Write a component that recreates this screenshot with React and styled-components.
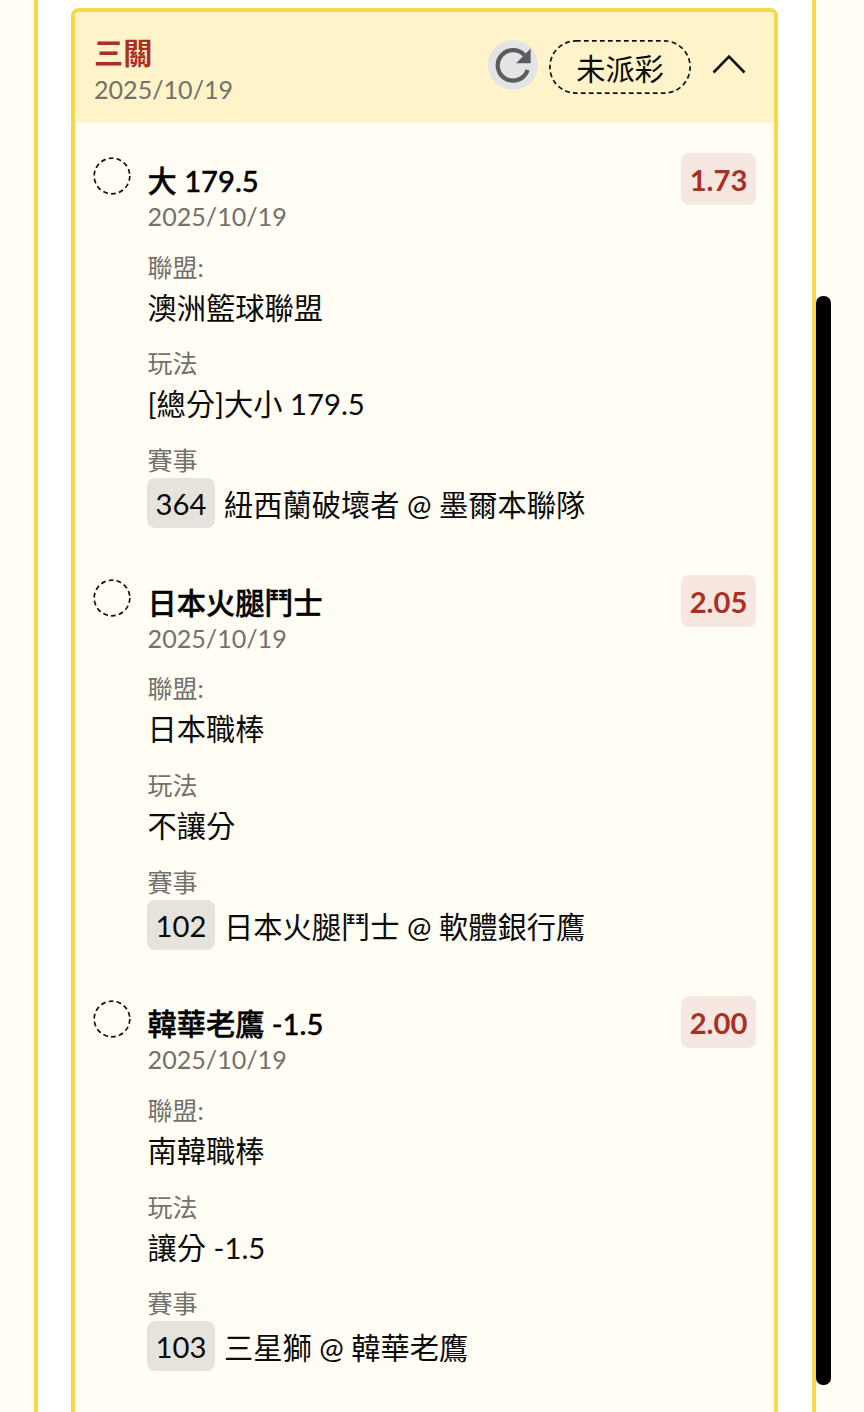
import React from 'react';
import styled, { createGlobalStyle, ThemeProvider } from 'styled-components';

const theme = {
    font: 'Lato, "Noto Sans CJK TC", sans-serif',
    colors: {
        page: '#fffdf4',
        panel: '#ffffff',
        border: '#f4d948',
        header: '#fff3ca',
        red: '#aa2f24',
        redSoft: '#f7e7e1',
        chip: '#e6e3dc',
        muted: '#73716b',
        text: '#0b0b0b',
    },
};

const GlobalStyle = createGlobalStyle`
    * {
        box-sizing: border-box;
    }

    body {
        margin: 0;
        background: #fffdf4;
    }
`;

const Page = styled.div`
    position: relative;
    height: 1412px;
    padding: 0 48px 0 34px;
    overflow: hidden;
    font-family: ${p => p.theme.font};
    color: ${p => p.theme.colors.text};
    background: ${p => p.theme.colors.page};
`;

const Panel = styled.main`
    width: 782px;
    height: 100%;
    padding: 8px 34px 0 33px;
    background: ${p => p.theme.colors.panel};
    border: solid ${p => p.theme.colors.border};
    border-width: 0 4px;
`;

const Scrollbar = styled.div`
    position: absolute;
    top: 296px;
    left: 816px;
    width: 14.5px;
    height: 1089px;
    border-radius: 7px;
    background: #000;
`;

const Card = styled.section`
    height: 1440px;
    overflow: hidden;
    background: ${p => p.theme.colors.page};
    border: 4px solid ${p => p.theme.colors.border};
    border-radius: 8px;
`;

const CardHeader = styled.header`
    display: flex;
    align-items: flex-start;
    height: 110px;
    padding: 23px 28px 0 19px;
    background: ${p => p.theme.colors.header};
`;

const Heading = styled.div`
    flex: 1;
`;

const Parlay = styled.h1`
    margin: 0;
    font-size: 29.2px;
    line-height: 36px;
    font-weight: 700;
    color: ${p => p.theme.colors.red};
`;

const DateText = styled.div`
    height: 36px;
    font-size: 25.1px;
    line-height: 36px;
    color: ${p => p.theme.colors.muted};
`;

const RefreshButton = styled.button`
    display: flex;
    align-items: center;
    justify-content: center;
    width: 50px;
    height: 50px;
    margin: 5px 11px 0 0;
    padding: 0;
    border: 0;
    border-radius: 50%;
    background: #e3e4e6;
`;

const Status = styled.div`
    position: relative;
    width: 142px;
    height: 54px;
    margin: 5px 21px 0 0;
    font-size: 29.2px;
    line-height: 58px;
    text-align: center;
`;

const DashOutline = styled.svg`
    position: absolute;
    top: 0;
    left: 0;
`;

const ToggleIcon = styled.svg`
    margin-top: 18px;
`;

const Bets = styled.div`
    display: flex;
    flex-direction: column;
    padding: 31px 18px 0 18px;
`;

const Bet = styled.article`
    display: flex;
    align-items: flex-start;
    height: 421.6px;
`;

const Pending = styled.svg`
    flex: none;
    margin: 4px 16.6px 0 0;
`;

const BetBody = styled.div`
    flex: 1;
    padding-top: 10px;
`;

const BetTitle = styled.h2`
    margin: 0;
    height: 35px;
    font-size: 29.2px;
    line-height: 35px;
    font-weight: 500;
    white-space: nowrap;
    color: #000;
    -webkit-text-stroke: 0.4px #000;
`;

const Odds = styled.div`
    width: 75px;
    height: 52px;
    border-radius: 8px;
    font-size: 29.2px;
    line-height: 54px;
    font-weight: 700;
    text-align: center;
    color: ${p => p.theme.colors.red};
    background: ${p => p.theme.colors.redSoft};
`;

const Field = styled.div`
    margin-top: 14.7px;
`;

const Label = styled.div`
    height: 36px;
    font-size: 25px;
    line-height: 36px;
    color: ${p => p.theme.colors.muted};
`;

const Value = styled.div`
    height: 46px;
    font-size: 29.25px;
    line-height: 46px;
    white-space: nowrap;
`;

const Match = styled.div`
    display: flex;
    align-items: flex-start;
    gap: 9px;
    height: 50px;
    margin-left: -0.6px;
    font-size: 29.25px;
    line-height: 54px;
    white-space: nowrap;
`;

const MatchNo = styled.span`
    width: 68px;
    height: 50px;
    border-radius: 8px;
    line-height: 52px;
    text-align: center;
    background: ${p => p.theme.colors.chip};
`;

const bets = [
    { title: '大 179.5', odds: '1.73', league: '澳洲籃球聯盟', play: '[總分]大小 179.5', no: '364', match: '紐西蘭破壞者 @ 墨爾本聯隊' },
    { title: '日本火腿鬥士', odds: '2.05', league: '日本職棒', play: '不讓分', no: '102', match: '日本火腿鬥士 @ 軟體銀行鷹' },
    { title: '韓華老鷹 -1.5', odds: '2.00', league: '南韓職棒', play: '讓分 -1.5', no: '103', match: '三星獅 @ 韓華老鷹' },
];

const RefreshIcon = () => (
    <svg width="50" height="50" viewBox="0 0 50 50">
        <path d="M39.6 30A15.3 15.3 0 1 1 36.5 15.2" fill="none" stroke="#5b5c5f" strokeWidth="4.2" />
        <path d="M42.7 8.5V23.3H28Z" fill="#5b5c5f" />
    </svg>
);

const BetRow = ({ bet }) => (
    <Bet>
        <Pending width="38" height="38" viewBox="0 0 38 38">
            <circle cx="19" cy="19" r="17.8" fill="none" stroke="#111" strokeWidth="1.7" strokeDasharray="4.8 3.2" />
        </Pending>
        <BetBody>
            <BetTitle>{bet.title}</BetTitle>
            <DateText>2025/10/19</DateText>
            <Field>
                <Label>聯盟:</Label>
                <Value>{bet.league}</Value>
            </Field>
            <Field>
                <Label>玩法</Label>
                <Value>{bet.play}</Value>
            </Field>
            <Field>
                <Label>賽事</Label>
                <Match><MatchNo>{bet.no}</MatchNo>{bet.match}</Match>
            </Field>
        </BetBody>
        <Odds>{bet.odds}</Odds>
    </Bet>
);

const App = () => (
    <ThemeProvider theme={theme}>
        <GlobalStyle />
        <Page>
            <Panel>
                <Card>
                    <CardHeader>
                        <Heading>
                            <Parlay>三關</Parlay>
                            <DateText>2025/10/19</DateText>
                        </Heading>
                        <RefreshButton><RefreshIcon /></RefreshButton>
                        <Status>
                            <DashOutline width="142" height="54" viewBox="0 0 142 54">
                                <rect x="0.9" y="0.9" width="140.2" height="52.2" rx="26" fill="none" stroke="#111" strokeWidth="1.7" strokeDasharray="4.8 3.2" />
                            </DashOutline>
                            未派彩
                        </Status>
                        <ToggleIcon width="34" height="22" viewBox="0 0 34 22">
                            <path d="M1.5 19.5L17 3.5L32.5 19.5" fill="none" stroke="#111" strokeWidth="2.6" />
                        </ToggleIcon>
                    </CardHeader>
                    <Bets>
                        {bets.map(bet => <BetRow key={bet.no} bet={bet} />)}
                    </Bets>
                </Card>
            </Panel>
            <Scrollbar />
        </Page>
    </ThemeProvider>
);

export default App;
